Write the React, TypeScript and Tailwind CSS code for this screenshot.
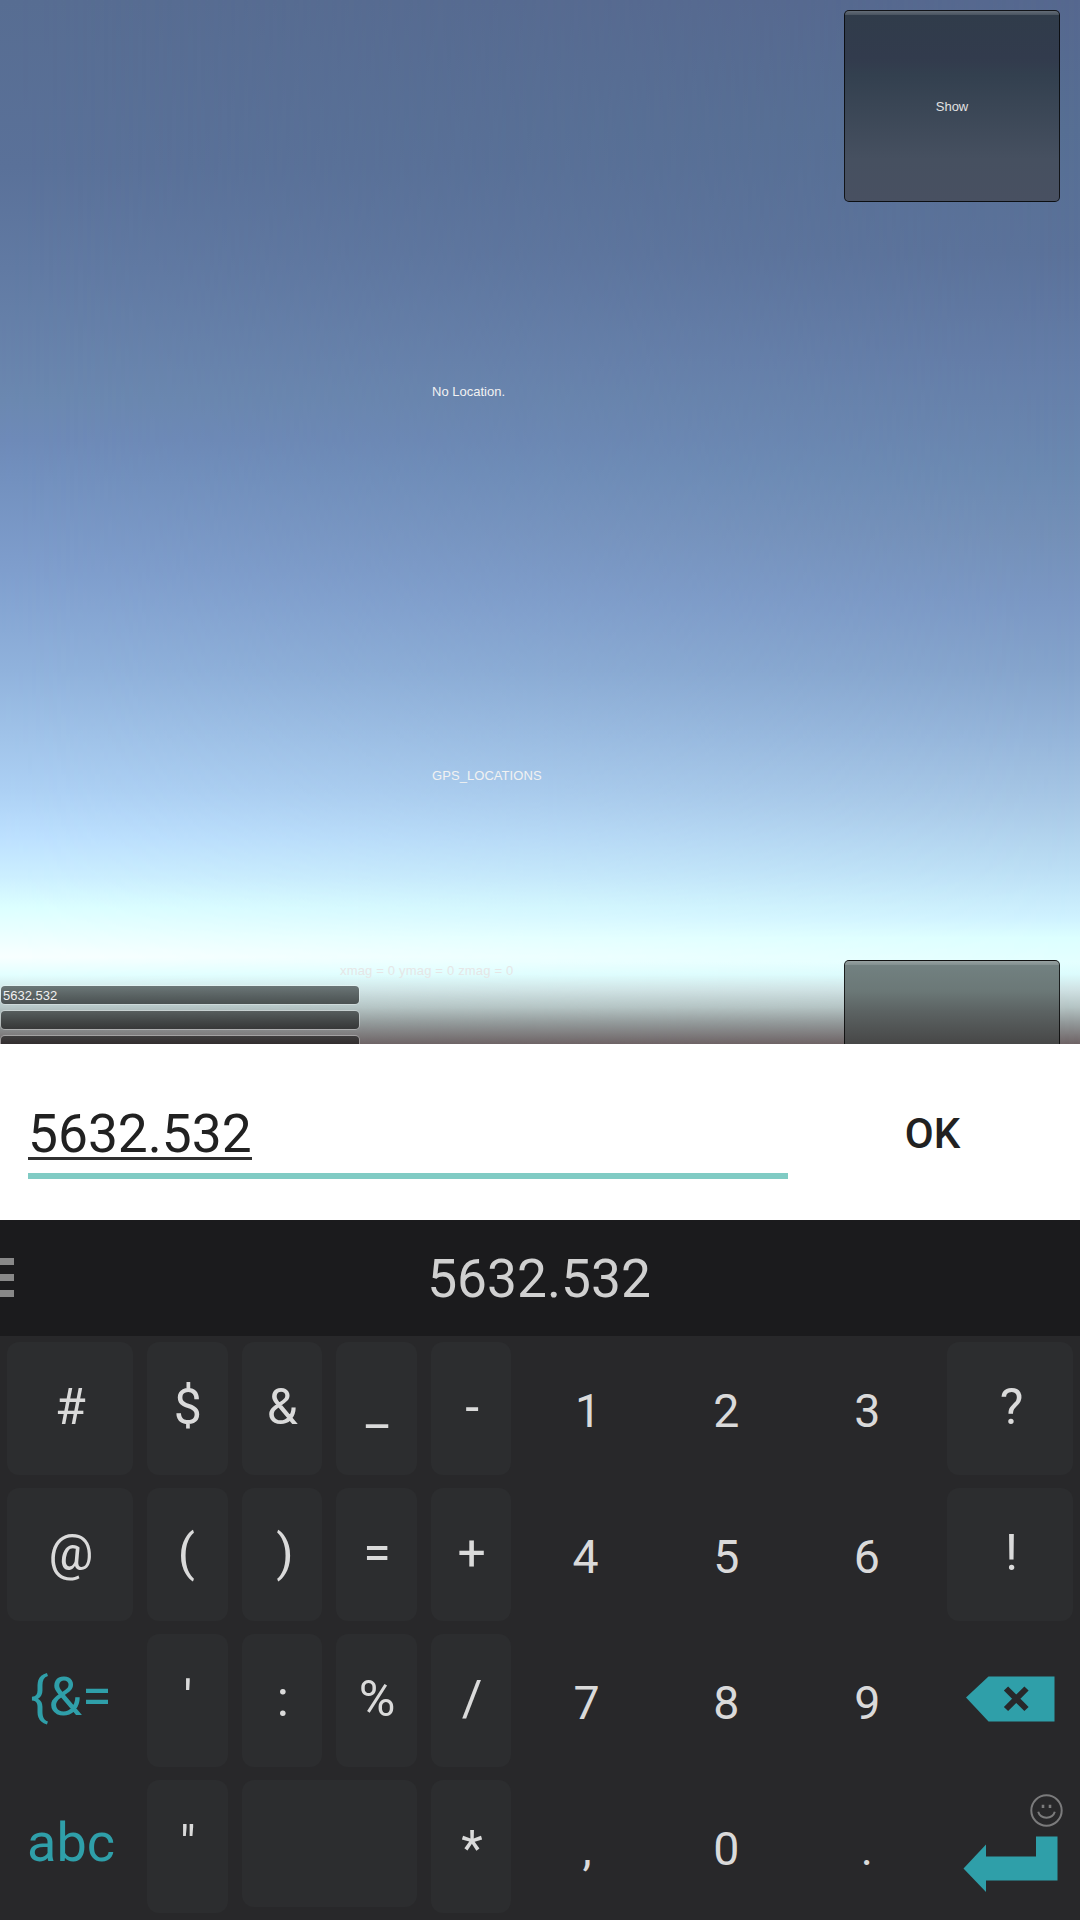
import type { ReactNode } from "react";

type KeyKind = "symbol" | "digit" | "mode" | "icon";

const glyphClass: Record<KeyKind, string> = {
  symbol: "text-[50px] leading-[60px] text-[#dadada] translate-x-[0.5px] -translate-y-[2px]",
  digit: "text-[46.5px] leading-[60px] text-[#dadada] -translate-x-[3px] translate-y-[2px]",
  mode: "text-[54px] leading-[60px] text-[#2f9fa9] translate-x-px -translate-y-[4px]",
  icon: "",
};

function Key({
  children,
  kind = "symbol",
  span = "",
  nudge = "",
  short = false,
}: {
  children?: ReactNode;
  kind?: KeyKind;
  span?: string;
  nudge?: string;
  short?: boolean;
}) {
  const face = kind === "symbol" ? "bg-[#2c2d2f]" : "";
  return (
    <div className={`flex px-[7px] pt-[6px] ${short ? "pb-[13px]" : "pb-[7px]"} ${span}`}>
      <button className={`flex flex-1 items-center justify-center rounded-[12px] ${face} ${nudge}`}>
        <span className={glyphClass[kind]}>{children}</span>
      </button>
    </div>
  );
}

function Backspace() {
  return (
    <svg className="block h-[46px] w-[90px] translate-x-[0.5px] -translate-y-[2px]" viewBox="0 0 90 46" fill="none">
      <path d="M0.5 21.5 23 0.5H89V45.5H23Z" fill="#2f9fa9" />
      <path d="M40.5 12.5 61 33M61 12.5 40.5 33" stroke="#28282a" strokeWidth="6" />
    </svg>
  );
}

function Enter() {
  return (
    <div className="relative translate-y-[17px]">
      <svg className="block h-[56px] w-[95px]" viewBox="0 0 95 56">
        <path d="M0.5 32.5 23 8.5V20.5H73V0.5H94.5V44.5H23V56Z" fill="#2f9fa9" />
      </svg>
      <svg
        className="absolute -top-[42px] left-[67px] h-[33px] w-[33px]"
        viewBox="0 0 33 33"
        fill="none"
        stroke="#7b7b7c"
        strokeWidth="2"
      >
        <circle cx="16.5" cy="16.5" r="15.2" />
        <path d="M8.2 17.8C10.5 25.6 22.5 25.6 24.8 17.8" />
        <path d="M13 10.8V14M20 10.8V14" strokeWidth="2.6" />
      </svg>
    </div>
  );
}

function Field({ value = "" }: { value?: string }) {
  return (
    <div className="flex h-[18px] w-[358px] shrink-0 items-center rounded-[4px] bg-linear-to-b from-black/50 to-black/60 pl-[2px] text-[13px] leading-none text-[#f0f0f0] shadow-[0_0_0_1px_rgba(255,255,255,0.3)]">
      {value}
    </div>
  );
}

function Panel({ children, tone, label = "" }: { children?: ReactNode; tone: string; label?: string }) {
  return (
    <button
      aria-label={label || undefined}
      className={`flex h-[192px] w-[216px] shrink-0 flex-col rounded-[5px] border border-black/75 ${tone}`}
    >
      <span className="h-[4px] w-full shrink-0 rounded-t-[4px] bg-linear-to-b from-white/25 to-white/12" />
      <span className="flex w-full flex-1 items-center justify-center pb-[4px] text-[13px] text-[#e2e2e2]">{children}</span>
    </button>
  );
}

export default function App() {
  return (
    <div className="flex h-[1920px] w-[1080px] flex-col overflow-hidden bg-[#28282a] font-['Roboto',sans-serif]">
      <main className="relative h-[1044px] shrink-0 overflow-hidden bg-[linear-gradient(to_bottom,#56688f_0px,#576f94_130px,#5b729a_254px,#647da8_362px,#6b89b1_469px,#7490b8_536px,#7b98c4_603px,#85a4cc_670px,#95b5da_737px,#a8c8e6_804px,#bcdff5_871px,#cff2ff_918px,#dcffff_938px,#e4ffff_962px,#dcfcfd_974px,#cfe1e3_990px,#b5c4c4_1007px,#929899_1023px,#6e6365_1044px)] font-['Liberation_Sans',Arial,sans-serif] text-[13px] leading-[15px]">
        <div className="absolute inset-0 bg-[linear-gradient(to_bottom,#576d92_0px,#5a7199_167px,#617aa3_268px,#6b88b0_400px,#6e8ab8_440px,#7290be_475px,#7f9ecd_570px,#90b2dc_670px,#a0c3e9_737px,#acd0f4_790px,#bce0ff_837px,#ccefff_877px,#dcffff_908px,#f8ffff_957px,#e2ffff_975px,#d0e6e7_990px,#b6c6c6_1007px,#939b9b_1023px,#6e6567_1044px)] mask-[linear-gradient(to_right,black,transparent)]" />
        <div className="relative flex h-full">
          <div className="flex w-[360px] flex-col gap-[7px] pt-[986px] pl-px">
            <Field value="5632.532" />
            <Field />
            <Field />
          </div>
          <div className="flex flex-1 flex-col pt-[384px] pl-[72px] text-[#f2f2f2]">
            <p>No Location.</p>
            <p className="mt-[369px] tracking-[0.06px]">GPS_LOCATIONS</p>
            <p className="mt-[180px] -ml-[92px] tracking-[0.18px] text-[#e6e6e6]">xmag = 0 ymag = 0 zmag = 0</p>
          </div>
          <div className="flex w-[236px] flex-col gap-[758px] pt-[10px]">
            <Panel tone="bg-[linear-gradient(to_bottom,#303c4a,#323b4d_25%,#33404f_34%,#465060_78%,#485061)]">Show</Panel>
            <Panel tone="bg-[linear-gradient(to_bottom,#738282_0px,#6b7877_30px,#5c6363_50px,#464646_84px)]" label="Hide" />
          </div>
        </div>
      </main>

      <section className="flex h-[176px] shrink-0 bg-white text-[#212121]">
        <div className="ml-[28px] flex h-[135px] w-[760px] flex-col justify-end border-b-[6px] border-[#80cbc4]">
          <div className="mb-[13px] w-fit border-b-[3px] border-[#303030] text-[53.3px] leading-[46px]">5632.532</div>
        </div>
        <button className="flex-1 pt-[2px] pr-[3px] text-[42px] font-medium">OK</button>
      </section>

      <section className="flex h-[116px] shrink-0 items-center bg-[#1b1b1d]">
        <div className="mb-[2px] flex w-[14px] flex-col gap-[9px]">
          <span className="h-[7px] bg-[#888]" />
          <span className="h-[7px] bg-[#888]" />
          <span className="h-[7px] bg-[#888]" />
        </div>
        <div className="flex-1 pt-[3px] pr-[16px] text-center text-[53.3px] text-[#d0d0d0]">5632.532</div>
      </section>

      <section className="grid h-[584px] shrink-0 grid-cols-[140px_94.6px_94.6px_94.6px_94.6px_140.6px_140.6px_140.6px_139.8px] grid-rows-4">
        <Key>#</Key>
        <Key>$</Key>
        <Key>&amp;</Key>
        <Key>_</Key>
        <Key nudge="pl-px">-</Key>
        <Key kind="digit" nudge="pl-[5px]">1</Key>
        <Key kind="digit">2</Key>
        <Key kind="digit" nudge="pl-px">3</Key>
        <Key nudge="pl-[2px]">?</Key>

        <Key nudge="pl-px">@</Key>
        <Key nudge="pr-[3px]">(</Key>
        <Key nudge="pl-[5px]">)</Key>
        <Key>=</Key>
        <Key>+</Key>
        <Key kind="digit">4</Key>
        <Key kind="digit">5</Key>
        <Key kind="digit">6</Key>
        <Key nudge="pl-[2px]">!</Key>

        <Key kind="mode">{"{&="}</Key>
        <Key>'</Key>
        <Key nudge="pl-px">:</Key>
        <Key>%</Key>
        <Key nudge="pl-px">/</Key>
        <Key kind="digit" nudge="pl-[2px]">7</Key>
        <Key kind="digit">8</Key>
        <Key kind="digit" nudge="pl-px">9</Key>
        <Key kind="icon">
          <Backspace />
        </Key>

        <Key kind="mode">abc</Key>
        <Key>"</Key>
        <Key span="col-span-2" short />
        <Key nudge="pt-[9px] pl-px">*</Key>
        <Key kind="digit" nudge="pl-[3px]">,</Key>
        <Key kind="digit">0</Key>
        <Key kind="digit">.</Key>
        <Key kind="icon">
          <Enter />
        </Key>
      </section>
    </div>
  );
}
